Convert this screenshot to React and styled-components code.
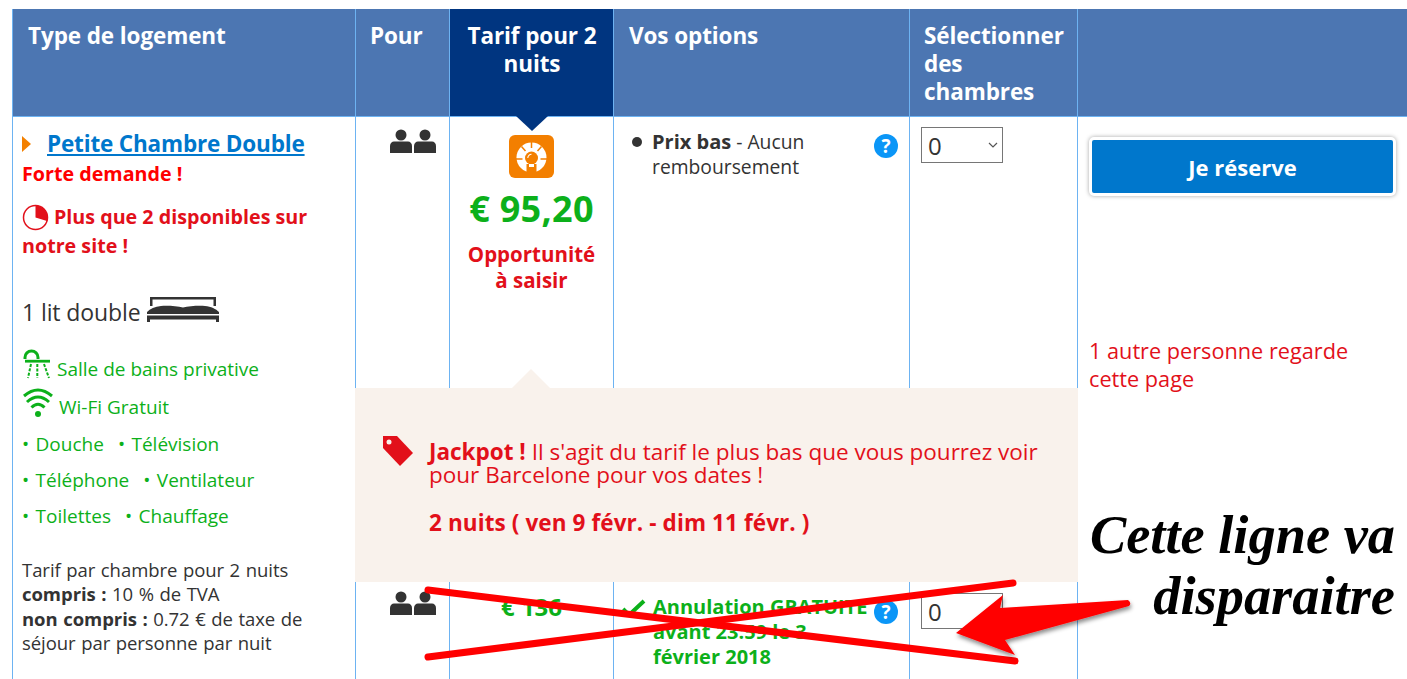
import React from "react";
import styled, { createGlobalStyle } from "styled-components";

const GREEN = "#0cb01a";
const RED = "#e2101a";
const BLUE = "#0077cc";
const LINE = "#6db3f2";
const DARK = "#333";

const Global = createGlobalStyle`
  html, body {
    margin: 0;
    padding: 0;
    height: 679px;
    overflow: hidden;
    background: #fff;
  }
  body {
    font-family: "Open Sans", "Noto Sans", sans-serif;
    color: ${DARK};
  }
`;

const Page = styled.div`
  position: relative;
  width: 1407px;
  height: 679px;
  overflow: hidden;
  padding: 9px 0 0 12px;
  box-sizing: border-box;
`;

const Table = styled.div`
  display: grid;
  grid-template-columns: 343px 94px 164px 296px 168px 330px;
  grid-template-rows: 108px 463px 120px;
`;

const Head = styled.div`
  background: ${(p) => (p.$active ? "#003580" : "#4c76b2")};
  color: #fff;
  font-size: 22.5px;
  font-weight: 700;
  line-height: 28px;
  letter-spacing: -0.1px;
  padding: 13px 14px 0 ${(p) => p.$pad || 15}px;
  border-left: 1px solid ${LINE};
  border-bottom: 1px solid ${LINE};
  box-sizing: border-box;
  text-align: ${(p) => (p.$active ? "center" : "left")};
  position: relative;
`;

const Notch = styled.span`
  position: absolute;
  left: 50%;
  top: 107px;
  margin-left: -16px;
  width: 0;
  height: 0;
  border-left: 16px solid transparent;
  border-right: 16px solid transparent;
  border-top: 15px solid #003580;
`;

const Cell = styled.div`
  border-left: 1px solid ${LINE};
  box-sizing: border-box;
  min-width: 0;
`;

const RoomCell = styled(Cell)`
  grid-row: span 2;
  padding: 11px 0 0 9px;
  overflow: hidden;
`;

const RoomTitle = styled.div`
  display: flex;
  align-items: center;
  gap: 16px;
  height: 31px;
`;

const Arrow = styled.span`
  width: 0;
  height: 0;
  border-left: 9px solid #f38000;
  border-top: 8.5px solid transparent;
  border-bottom: 8.5px solid transparent;
`;

const RoomLink = styled.a`
  color: ${BLUE};
  font-size: 22.5px;
  font-weight: 700;
  letter-spacing: -0.17px;
  text-decoration: underline;
`;

const Alert = styled.div`
  color: ${(p) => p.$color || RED};
  font-size: 19.7px;
  font-weight: 700;
  line-height: 29px;
  width: 300px;
  margin-top: ${(p) => p.$top || 0}px;
`;

const BedLine = styled.div`
  display: flex;
  align-items: center;
  gap: 6px;
  margin-top: 35px;
  font-size: 23px;
  letter-spacing: -0.1px;
  line-height: 34px;
  height: 34px;
`;

const Feature = styled.div`
  display: flex;
  align-items: flex-end;
  gap: ${(p) => p.$gap}px;
  color: ${GREEN};
  font-size: 19px;
  line-height: 26px;
  height: ${(p) => p.$height}px;
  svg {
    margin-bottom: 3px;
  }
`;

const Facilities = styled.div`
  color: ${GREEN};
  font-size: 19px;
  word-spacing: 1.5px;
  line-height: 36px;
  margin-top: 6px;
`;

const Fac = styled.span`
  margin-right: 14px;
`;

const Note = styled.div`
  font-size: 18.5px;
  letter-spacing: -0.05px;
  word-spacing: 0.8px;
  line-height: 24.4px;
  margin-top: 24px;
`;

const PeopleCell = styled(Cell)`
  padding: ${(p) => p.$top}px 0 0 34px;
`;

const PriceCell = styled(Cell)`
  text-align: center;
  padding-top: ${(p) => p.$top}px;
`;

const Price = styled.div`
  color: ${GREEN};
  font-size: ${(p) => p.$size}px;
  font-weight: 700;
  letter-spacing: ${(p) => p.$spacing};
  line-height: 44px;
  margin-top: ${(p) => p.$top}px;
`;

const Deal = styled.div`
  color: ${RED};
  font-size: 20.5px;
  font-weight: 700;
  line-height: 26px;
  margin-top: 10px;
`;

const OptionCell = styled(Cell)`
  position: relative;
  display: flex;
  align-items: flex-start;
  padding: ${(p) => p.$top}px 0 0 ${(p) => p.$left}px;
  color: ${(p) => p.$color || DARK};
`;

const OptionMark = styled.span`
  flex: none;
  width: ${(p) => p.$width}px;
`;

const Dot = styled.span`
  display: block;
  width: 10px;
  height: 10px;
  border-radius: 50%;
  background: ${DARK};
  margin-top: 8px;
`;

const OptionText = styled.div`
  width: 218px;
  font-size: 19.3px;
  line-height: 25px;
  b {
    font-size: 20px;
    font-weight: 700;
  }
`;

const Help = styled.span`
  position: absolute;
  right: 11px;
  top: ${(p) => p.$top}px;
  width: 24px;
  height: 24px;
  border-radius: 50%;
  background: #0b96f7;
  color: #fff;
  font: 700 19px/24px "Open Sans", sans-serif;
  text-align: center;
`;

const SelectCell = styled(Cell)`
  padding: ${(p) => p.$top}px 0 0 11px;
`;

const FakeSelect = styled.div`
  display: flex;
  align-items: center;
  justify-content: space-between;
  width: 82px;
  height: 36px;
  box-sizing: border-box;
  border: 1px solid #767676;
  padding: 0 4px 0 6px;
  font-size: 24px;
  color: ${DARK};
  background: #fff;
`;

const ActionCell = styled(Cell)`
  padding: 20px 11px 0 11px;
`;

const Reserve = styled.button`
  display: block;
  width: 307px;
  height: 59px;
  margin: 0;
  box-sizing: border-box;
  background: ${BLUE};
  border: 3px solid #fff;
  border-radius: 5px;
  box-shadow: 0 0 4px rgba(0, 0, 0, 0.35);
  color: #fff;
  font-family: inherit;
  font-size: 22px;
  font-weight: 700;
`;

const Viewers = styled.div`
  color: ${RED};
  font-size: 21.7px;
  line-height: 28px;
  margin-top: 141px;
`;

const Popup = styled.div`
  position: absolute;
  left: 355px;
  top: 388px;
  width: 723px;
  height: 194px;
  background: #f9f2ec;
  box-sizing: border-box;
  padding: 48px 28px 0 28px;
  display: flex;
  gap: 16px;
  color: ${RED};
  &::before {
    content: "";
    position: absolute;
    left: 157px;
    top: -19px;
    border-left: 19px solid transparent;
    border-right: 19px solid transparent;
    border-bottom: 19px solid #f9f2ec;
  }
`;

const PopupBody = styled.div`
  font-size: 22.5px;
  line-height: 23px;
  padding-top: 4px;
  b {
    font-weight: 700;
  }
`;

const PopupDates = styled.div`
  font-weight: 700;
  letter-spacing: 0.1px;
  margin-top: 25px;
`;

const Scribble = styled.svg`
  position: absolute;
  left: 0;
  top: 0;
  pointer-events: none;
`;

const Remark = styled.div`
  position: absolute;
  right: 12px;
  top: 505px;
  text-align: right;
  color: #000;
  font-family: "Liberation Serif", serif;
  font-style: italic;
  font-weight: 700;
  font-size: 54.4px;
  line-height: 61px;
`;

function People() {
  return (
    <svg width="46" height="25" viewBox="0 0 46 25" fill={DARK}>
      <circle cx="11" cy="6" r="5.5" />
      <circle cx="35" cy="6" r="5.5" />
      <path d="M0 24v-7c0-3 2-4.500 4-4.500h14c2 0 4 1.500 4 4.500v7z" />
      <path d="M24 24v-7c0-3 2-4.500 4-4.500h14c2 0 4 1.500 4 4.500v7z" />
    </svg>
  );
}

function Pie() {
  return (
    <svg width="27" height="27" viewBox="0 0 27 27" style={{ verticalAlign: -7, marginRight: 5 }}>
      <circle cx="13.500" cy="13.500" r="12" fill="none" stroke={RED} strokeWidth="1.500" />
      <path d="M13.500 13.500V1.500a12 12 0 0 1 11.500 15.500z" fill={RED} />
    </svg>
  );
}

function Bed() {
  return (
    <svg width="72" height="25" viewBox="0 0 72 25" fill={DARK} style={{ marginTop: -6 }}>
      <path d="M3 0h66v9h-2.500V2.500H5.500V9H3z" />
      <path d="M0 15c3-3 8-5.500 14-6 6-.5 16 0 22 1.500 6-1.500 16-2 22-1.500 6 .5 11 3 14 6v2H0z" />
      <path d="M0 18.500h72V25h-3v-2.500H3V25H0z" />
    </svg>
  );
}

function Shower() {
  return (
    <svg width="28" height="30" viewBox="-1 0 28 30" fill="none" stroke={GREEN}>
      <path d="M2 10V8.500a6.500 6.500 0 0 1 13 0V10" strokeWidth="3" />
      <path d="M2 12.200h25" strokeWidth="2.800" />
      <path d="M8 15l-3 14M14.300 15v14M21 15l5 14" strokeWidth="2" strokeDasharray="3 1.500" />
    </svg>
  );
}

function Wifi() {
  return (
    <svg width="31" height="29" viewBox="-1 0 31 29" fill="none" stroke={GREEN} strokeWidth="3">
      <path d="M1 8Q15-4 29 8" />
      <path d="M4 14Q15 4 26 14" />
      <path d="M8.500 19.500Q15 13 21.500 19.500" />
      <circle cx="15" cy="26" r="3" fill={GREEN} stroke="none" />
    </svg>
  );
}

function Bulb() {
  return (
    <svg width="45" height="43" viewBox="0 0 45 43">
      <rect width="45" height="43" rx="6" fill="#f37f00" />
      <circle cx="22.500" cy="22.500" r="15" fill="#fff" />
      <path d="M22.500 7v6M12.500 11.500l4 4.500M32.500 11.500l-4 4.500M7 24h6.500M31.500 24H38" stroke="#f37f00" strokeWidth="1.500" fill="none" />
      <circle cx="22.500" cy="23" r="6.500" fill="#f37f00" />
      <path d="M18.800 23a3.700 3.700 0 0 1 3.700-3.700" stroke="#fff" strokeWidth="1.100" fill="none" />
      <path d="M17.500 29h10v10h-10z" fill="#f37f00" />
      <path d="M20 29h5v3h-5z" fill="#fff" />
    </svg>
  );
}

function Tag() {
  return (
    <svg width="30" height="30" viewBox="0 0 30 30" style={{ flex: "none" }}>
      <path d="M0 0h14l16 17-13 13L0 12z" fill={RED} />
      <circle cx="6" cy="6" r="2.500" fill="#f9f2ec" />
    </svg>
  );
}

function Chevron() {
  return (
    <svg width="10" height="6" viewBox="0 0 10 6" fill="none" stroke="#555" strokeWidth="1.200">
      <path d="M1 1l4 4 4-4" />
    </svg>
  );
}

function Check() {
  return (
    <svg width="24" height="18" viewBox="0 0 24 18" fill="none" stroke={GREEN} strokeWidth="4" style={{ marginTop: 5 }}>
      <path d="M1 10l6 6L22 2" />
    </svg>
  );
}

export default function App() {
  return (
    <Page>
      <Global />
      <Table>
        <Head>Type de logement</Head>
        <Head $pad={14}>Pour</Head>
        <Head $active>
          Tarif pour 2 nuits
          <Notch />
        </Head>
        <Head>Vos options</Head>
        <Head $pad={14}>Sélectionner des chambres</Head>
        <Head />

        <RoomCell>
          <RoomTitle>
            <Arrow />
            <RoomLink href="#">Petite Chambre Double</RoomLink>
          </RoomTitle>
          <Alert $color="#ff0000">Forte demande !</Alert>
          <Alert $color={RED} $top={14}>
            <Pie />
            Plus que 2 disponibles sur notre site !
          </Alert>
          <BedLine>
            1 lit double <Bed />
          </BedLine>
          <Feature $gap={7} $height={41} style={{ marginTop: 12 }}>
            <Shower />
            Salle de bains privative
          </Feature>
          <Feature $gap={6} $height={38}>
            <Wifi />
            Wi-Fi Gratuit
          </Feature>
          <Facilities>
            <div><Fac>• Douche</Fac>• Télévision</div>
            <div><Fac>• Téléphone</Fac>• Ventilateur</div>
            <div><Fac>• Toilettes</Fac>• Chauffage</div>
          </Facilities>
          <Note>
            Tarif par chambre pour 2 nuits
            <br />
            <b>compris :</b> 10 % de TVA
            <br />
            <b>non compris :</b> 0.72 € de taxe de
            <br />
            séjour par personne par nuit
          </Note>
        </RoomCell>

        <PeopleCell $top={12}><People /></PeopleCell>
        <PriceCell $top={18}>
          <Bulb />
          <Price $size={36} $spacing="0.3px" $top={4}>€ 95,20</Price>
          <Deal>Opportunité<br />à saisir</Deal>
        </PriceCell>
        <OptionCell $top={12} $left={18}>
          <OptionMark $width={20}><Dot /></OptionMark>
          <OptionText><b>Prix bas</b> - Aucun remboursement</OptionText>
          <Help $top={17}>?</Help>
        </OptionCell>
        <SelectCell $top={10}>
          <FakeSelect>0<Chevron /></FakeSelect>
        </SelectCell>
        <ActionCell>
          <Reserve>Je réserve</Reserve>
          <Viewers>1 autre personne regarde cette page</Viewers>
        </ActionCell>

        <PeopleCell $top={11}><People /></PeopleCell>
        <PriceCell $top={5}>
          <Price $size={24} $spacing="0" $top={0}>€ 136</Price>
        </PriceCell>
        <OptionCell $top={14} $left={8} $color={GREEN}>
          <OptionMark $width={31}><Check /></OptionMark>
          <OptionText><b>Annulation GRATUITE avant 23:59 le 3 février 2018</b></OptionText>
          <Help $top={20}>?</Help>
        </OptionCell>
        <SelectCell $top={13}>
          <FakeSelect>0<Chevron /></FakeSelect>
        </SelectCell>
        <Cell />
      </Table>

      <Popup>
        <Tag />
        <PopupBody>
          <b>Jackpot !</b> Il s'agit du tarif le plus bas que vous pourrez voir pour Barcelone pour vos dates !
          <PopupDates>2 nuits ( ven 9 févr. - dim 11 févr. )</PopupDates>
        </PopupBody>
      </Popup>

      <Scribble width="1407" height="679" viewBox="0 0 1407 679">
        <defs>
          <filter id="arrowShadow" x="-10%" y="-10%" width="120%" height="130%">
            <feDropShadow dx="1" dy="3" stdDeviation="2" floodColor="#000" floodOpacity="0.45" />
          </filter>
        </defs>
        <g stroke="#ff0000" strokeWidth="7" strokeLinecap="round">
          <path d="M428 590L1015 661" />
          <path d="M428 657L1013 583" />
        </g>
        <path
          d="M956 633L1003 595L1000 608L1128 600Q1132 603 1129 606L1005 640L1015 655z"
          fill="#ff0000"
          filter="url(#arrowShadow)"
        />
      </Scribble>

      <Remark>
        Cette ligne va
        <br />
        disparaitre
      </Remark>
    </Page>
  );
}
